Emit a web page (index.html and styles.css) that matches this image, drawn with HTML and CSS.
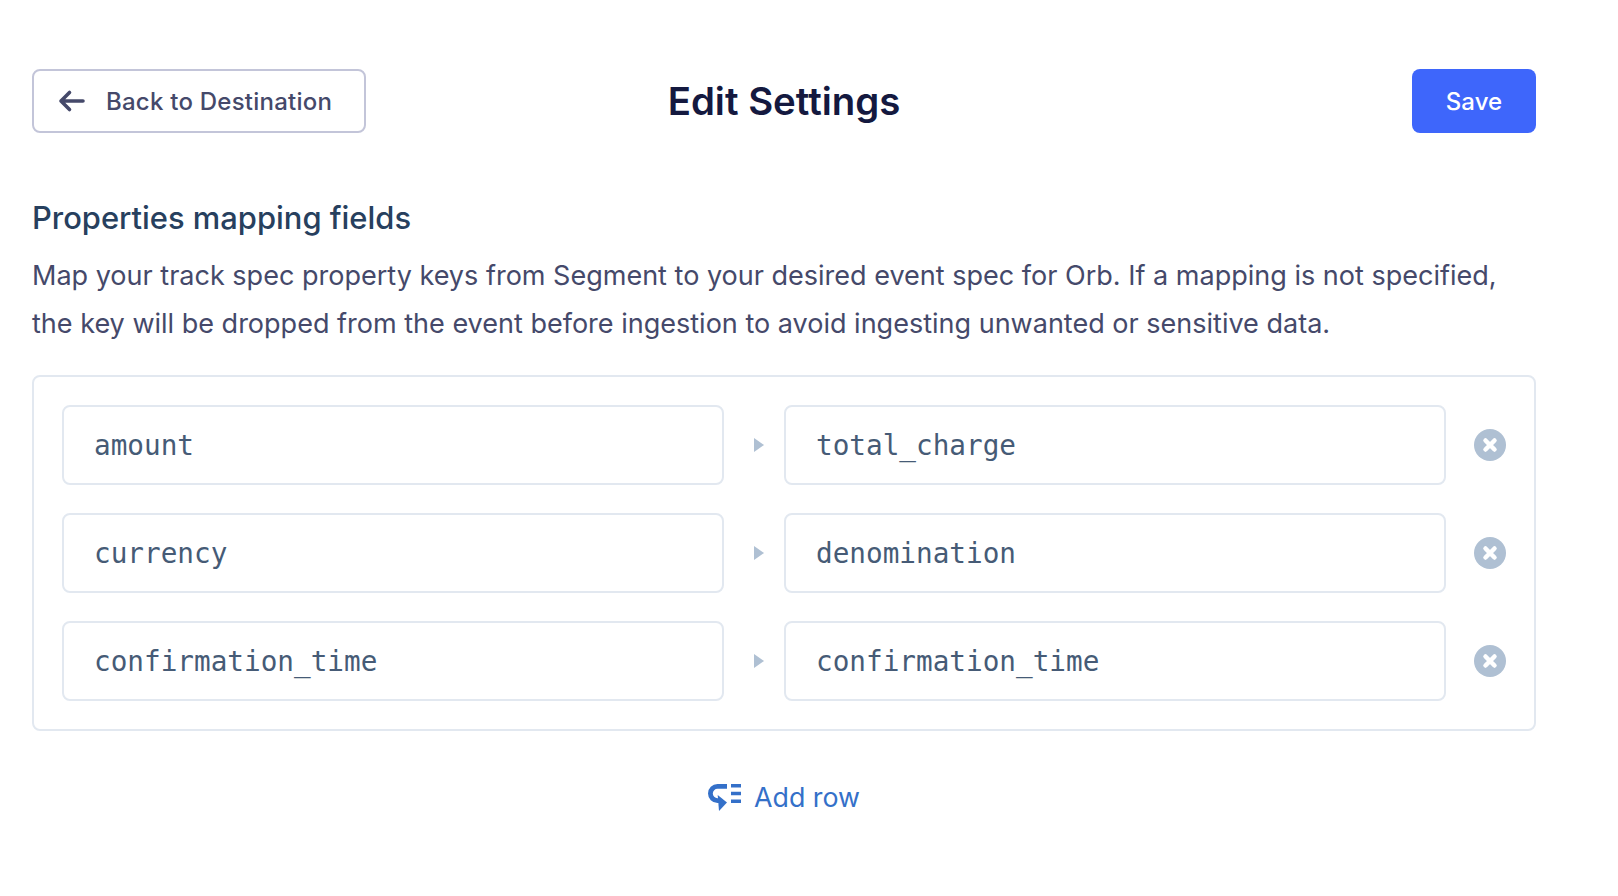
FILE: index.html
```html
<!DOCTYPE html>
<html lang="en">
<head>
<meta charset="utf-8">
<title>Edit Settings</title>
<link rel="stylesheet" href="styles.css">
</head>
<body>
<main class="page">
  <header class="topbar">
    <button class="btn btn-back" type="button">
      <svg class="back-icon" width="28" height="24" viewBox="0 0 28 24" fill="none" stroke="#45496a" stroke-width="3.6" stroke-linecap="round" stroke-linejoin="round"><path d="M25 12H3M11.500 3.500 3 12l8.500 8.500"/></svg>
      <span>Back to Destination</span>
    </button>
    <h1 class="title">Edit Settings</h1>
    <button class="btn btn-save" type="button">Save</button>
  </header>

  <section class="intro">
    <h2 class="section-title">Properties mapping fields</h2>
    <p class="section-text">Map your track spec property keys from Segment to your desired event spec for Orb. If a mapping is not specified, the key will be dropped from the event before ingestion to avoid ingesting unwanted or sensitive data.</p>
  </section>

  <section class="card">
    <div class="row">
      <div class="field">amount</div>
      <svg class="arrow" width="10" height="14" viewBox="0 0 10 14"><path d="M0 0l10 7-10 7z" fill="#afc0d3"/></svg>
      <div class="field">total_charge</div>
      <svg class="remove" width="32" height="32" viewBox="0 0 32 32"><circle cx="16" cy="16" r="16" fill="#afc0d3"/><path d="M11.500 11.500l9 9M20.500 11.500l-9 9" stroke="#fff" stroke-width="4.500" stroke-linecap="round"/></svg>
    </div>
    <div class="row">
      <div class="field">currency</div>
      <svg class="arrow" width="10" height="14" viewBox="0 0 10 14"><path d="M0 0l10 7-10 7z" fill="#afc0d3"/></svg>
      <div class="field">denomination</div>
      <svg class="remove" width="32" height="32" viewBox="0 0 32 32"><circle cx="16" cy="16" r="16" fill="#afc0d3"/><path d="M11.500 11.500l9 9M20.500 11.500l-9 9" stroke="#fff" stroke-width="4.500" stroke-linecap="round"/></svg>
    </div>
    <div class="row">
      <div class="field">confirmation_time</div>
      <svg class="arrow" width="10" height="14" viewBox="0 0 10 14"><path d="M0 0l10 7-10 7z" fill="#afc0d3"/></svg>
      <div class="field">confirmation_time</div>
      <svg class="remove" width="32" height="32" viewBox="0 0 32 32"><circle cx="16" cy="16" r="16" fill="#afc0d3"/><path d="M11.500 11.500l9 9M20.500 11.500l-9 9" stroke="#fff" stroke-width="4.500" stroke-linecap="round"/></svg>
    </div>
  </section>

  <div class="add-wrap">
    <a class="add-row" href="#">
      <svg class="add-icon" width="33" height="27" viewBox="0 0 33 27" fill="none"><path d="M19 2.400H9.500a7 7 0 0 0 0 14.200H12" stroke="#3470c9" stroke-width="4.800"/><path d="M9.700 11l9.300 7.500-8 8.500z" fill="#3470c9"/><path d="M23 1.700h10M23 9.500h10M23 17.300h10" stroke="#3470c9" stroke-width="3.400"/></svg>
      <span>Add row</span>
    </a>
  </div>
</main>
</body>
</html>
```
FILE: styles.css
```css
* { box-sizing: border-box; }
html, body { margin: 0; background: #fff; }
body { font-family: Inter, "Noto Sans", sans-serif; color: #45496a; }
.page { width: 1504px; margin-left: 32px; padding-top: 69px; }
.topbar { display: flex; align-items: center; justify-content: space-between; height: 64px; position: relative; }
.btn { font-family: inherit; font-size: 24px; font-weight: 500; height: 64px; border-radius: 8px; display: flex; align-items: center; }
.btn-back { width: 334px; background: #fff; border: 2px solid #c3c5d9; color: #45496a; padding: 0 0 0 24px; gap: 20px; letter-spacing: .24px; }
.btn-save { width: 124px; justify-content: center; background: #3e66fb; border: 0; color: #fff; letter-spacing: .1px; }
.title { position: absolute; left: 0; right: 0; margin: 0; text-align: center; font-size: 38.400px; font-weight: 600; color: #14193f; pointer-events: none; line-height: 64px; }
.intro { margin-top: 65px; }
.section-title { margin: 0; font-size: 30.900px; font-weight: 500; line-height: 40px; color: #27405e; }
.section-text { margin: 14px 0 0; font-size: 27.030px; line-height: 48px; color: #45496a; }
.card { margin-top: 27px; height: 356px; border: 2px solid #e2e8f0; border-radius: 8px; padding: 28px; display: flex; flex-direction: column; gap: 28px; }
.row { display: flex; align-items: center; height: 80px; }
.field { flex: none; width: 662px; height: 80px; border: 2px solid #e2e8f0; border-radius: 8px; padding-left: 30px; display: flex; align-items: center; font-family: "DejaVu Sans Mono", monospace; font-size: 27.700px; color: #465b76; }
.arrow { margin: 0 20px 0 30px; flex: none; }
.remove { margin-left: 28px; flex: none; }
.add-wrap { display: flex; justify-content: center; margin-top: 46px; }
.add-row { display: flex; align-items: center; gap: 13px; font-size: 26.800px; color: #3470c9; text-decoration: none; height: 40px; }
.add-icon { flex: none; }
```
